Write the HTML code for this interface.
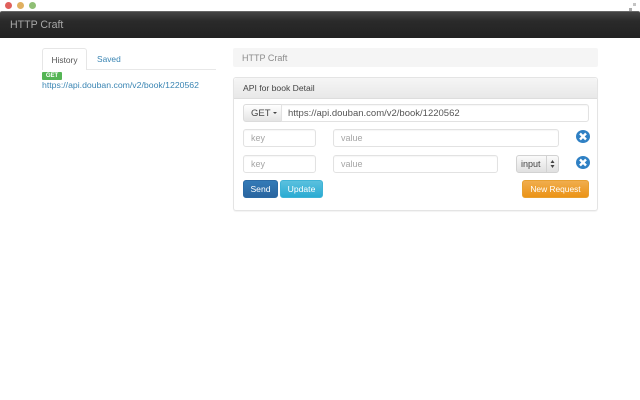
<!DOCTYPE html>
<html><head><meta charset="utf-8"><style>
html,body{margin:0;padding:0;background:#fff}
body{width:640px;height:400px;position:relative;overflow:hidden;font-family:"Liberation Sans",sans-serif;font-size:9px;color:#555}
.a{position:absolute;box-sizing:border-box;white-space:nowrap}
.dot{width:7px;height:7px;border-radius:50%;top:2px}
.inp{background:#fff;border:1px solid #e2e2e2;border-radius:3px;height:18px;line-height:17px;padding-left:7px;color:#a5a5a5;font-size:9px;box-shadow:inset 0 1px 1px rgba(0,0,0,.04)}
.btn{border-radius:3px;height:18px;line-height:17px;text-align:center;color:#fff;font-size:8.6px}
.x{width:14px;height:13px}
#w{position:absolute;left:0;top:0;width:640px;height:400px;filter:blur(.3px)}
</style></head><body><div id="w">
<div class="a dot" style="left:5px;background:#e0605c"></div>
<div class="a dot" style="left:17px;background:#e0b060"></div>
<div class="a dot" style="left:29px;background:#8fbf75"></div>
<svg class="a" style="left:628px;top:3px" width="9" height="8" viewBox="0 0 9 8"><rect x="5" y="0" width="3" height="3" fill="#c4c4c4"/><rect x="1" y="5" width="3" height="3" fill="#aaa"/></svg>
<div class="a" style="left:0;top:11px;width:640px;height:27px;background:linear-gradient(#444,#2a2a2a 35%,#222);border-top:1px solid #666;border-radius:2px 2px 0 0"></div>
<div class="a" style="left:10px;top:18px;font-size:10.6px;color:#a8a8a8;line-height:14px">HTTP Craft</div>

<div class="a" style="left:42px;top:69px;width:174px;height:1px;background:#e8e8e8"></div>
<div class="a" style="left:42px;top:48px;width:45px;height:22px;background:#fff;border:1px solid #e6e6e6;border-bottom:0;border-radius:3px 3px 0 0;text-align:center;line-height:22px;color:#555;font-size:8.4px">History</div>
<div class="a" style="left:97px;top:48px;line-height:23px;color:#3a85b3;font-size:8.4px">Saved</div>
<div class="a" style="left:42px;top:72px;width:20px;height:8px;background:#55b555;border-radius:1px;color:#fff;font-size:6px;font-weight:700;text-align:center;line-height:8px">GET</div>
<div class="a" style="left:42px;top:79px;color:#3a85b3;font-size:8.7px;line-height:12px">https://api.douban.com/v2/book/1220562</div>

<div class="a" style="left:233px;top:48px;width:365px;height:19px;background:#f5f5f5;border-radius:2px;padding-left:9px;line-height:20px;color:#8c8c8c;font-size:9px">HTTP Craft</div>

<div class="a" style="left:233px;top:77px;width:365px;height:134px;background:#fff;border:1px solid #e4e4e4;border-radius:3px;box-shadow:0 1px 1px rgba(0,0,0,.05)"></div>
<div class="a" style="left:234px;top:78px;width:363px;height:21px;background:linear-gradient(#f5f5f5,#e8e8e8);border-bottom:1px solid #ddd;border-radius:3px 3px 0 0;padding-left:9px;line-height:21px;color:#444;font-size:8.6px">API for book Detail</div>

<div class="a" style="left:243px;top:104px;width:39px;height:18px;background:linear-gradient(#fff,#e4e4e4);border:1px solid #dcdcdc;border-radius:3px 0 0 3px;line-height:17px;padding-left:7px;color:#444;font-size:9.5px">GET <span style="display:inline-block;border:2px solid transparent;border-top:2px solid #444;border-bottom:0;vertical-align:2px"></span></div>
<div class="a inp" style="left:281px;top:104px;width:308px;border-radius:0 3px 3px 0;color:#555;padding-left:6px;font-size:9.5px">https://api.douban.com/v2/book/1220562</div>

<div class="a inp" style="left:243px;top:129px;width:73px">key</div>
<div class="a inp" style="left:333px;top:129px;width:226px">value</div>
<div class="a inp" style="left:243px;top:155px;width:73px">key</div>
<div class="a inp" style="left:333px;top:155px;width:165px">value</div>

<div class="a" style="left:516px;top:155px;width:43px;height:18px;background:linear-gradient(#fafafa,#e0e0e0);border:1px solid #d2d2d2;border-radius:3px;line-height:17px;padding-left:4px;color:#444;font-size:9px">input</div>
<div class="a" style="left:546px;top:156px;width:1px;height:16px;background:#d2d2d2"></div>
<svg class="a" style="left:550px;top:160px" width="5" height="8" viewBox="0 0 5 8"><path d="M2.5 0 L4.5 3 H.5Z M2.5 8 L4.5 5 H.5Z" fill="#444"/></svg>

<svg class="a x" style="left:576px;top:130px" viewBox="0 0 14 13"><ellipse cx="7" cy="6.5" rx="7" ry="6.5" fill="#2f80c4"/><path d="M4 3.5L10 9.5M10 3.5L4 9.5" stroke="#fff" stroke-width="2.4"/></svg>
<svg class="a x" style="left:576px;top:156px" viewBox="0 0 14 13"><ellipse cx="7" cy="6.5" rx="7" ry="6.5" fill="#2f80c4"/><path d="M4 3.5L10 9.5M10 3.5L4 9.5" stroke="#fff" stroke-width="2.4"/></svg>

<div class="a btn" style="left:243px;top:180px;width:35px;background:linear-gradient(#337ab7,#2a659f);border:1px solid #2b6aa5">Send</div>
<div class="a btn" style="left:280px;top:180px;width:43px;background:linear-gradient(#5bc0de,#2aabd2);border:1px solid #3fb3d6">Update</div>
<div class="a btn" style="left:522px;top:180px;width:67px;background:linear-gradient(#f0ad4e,#eb9316);border:1px solid #e8a030;font-size:8.4px">New Request</div>
</div></body></html>
